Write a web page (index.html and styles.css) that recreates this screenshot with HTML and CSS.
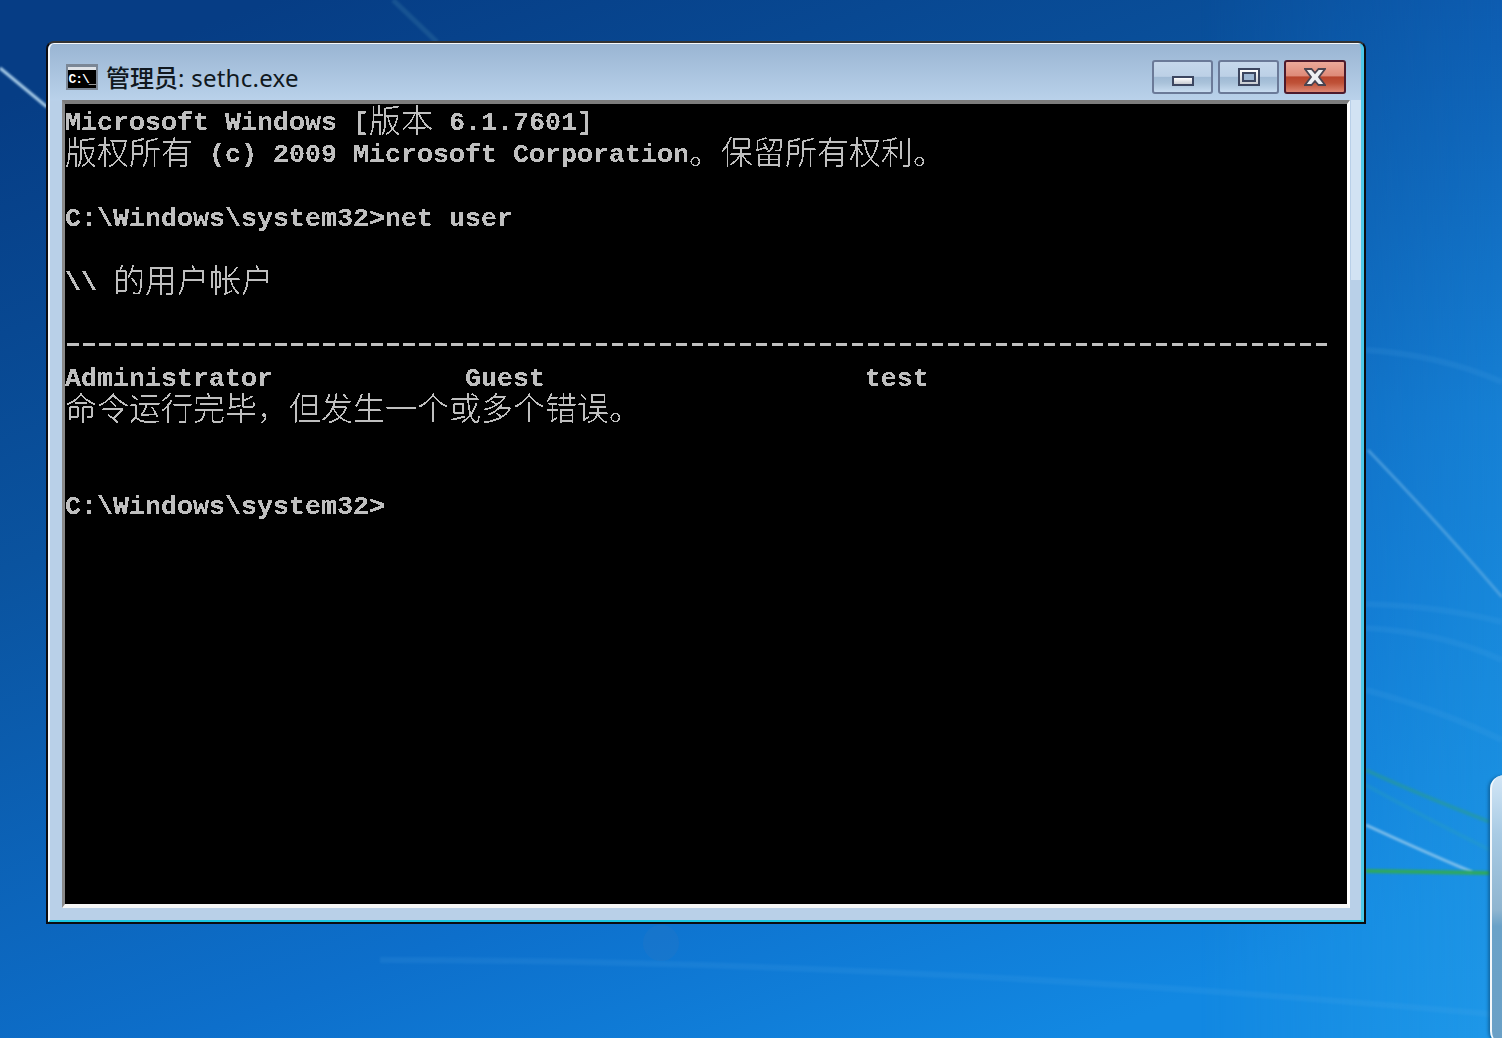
FILE: index.html
```html
<!DOCTYPE html>
<html lang="zh-CN">
<head>
<meta charset="utf-8">
<title>sethc.exe</title>
<link rel="stylesheet" href="styles.css">
</head>
<body class="desktop">
<svg class="wallpaper" viewBox="0 0 1502 1038" width="1502" height="1038" aria-hidden="true">
  <defs>
    <linearGradient id="sky" x1="0.18" y1="0" x2="0.72" y2="1">
      <stop offset="0" stop-color="#063d85"/>
      <stop offset="0.35" stop-color="#0a539f"/>
      <stop offset="0.75" stop-color="#0d6fcb"/>
      <stop offset="1" stop-color="#1288e2"/>
    </linearGradient>
    <linearGradient id="glow" x1="0" y1="0" x2="0" y2="1">
      <stop offset="0" stop-color="#0d5cb0"/>
      <stop offset="0.4" stop-color="#1680d4"/>
      <stop offset="0.75" stop-color="#1a8fe0"/>
      <stop offset="1" stop-color="#1f98e8"/>
    </linearGradient>
    <linearGradient id="fade" x1="0" y1="0" x2="1" y2="0">
      <stop offset="0" stop-color="#fff" stop-opacity="0"/>
      <stop offset="1" stop-color="#fff"/>
    </linearGradient>
    <mask id="rightFade"><rect x="1200" width="302" height="1038" fill="url(#fade)"/></mask>
    <filter id="crisp" color-interpolation-filters="sRGB" x="0" y="0" width="100%" height="100%">
      <feComponentTransfer>
        <feFuncR type="discrete" tableValues="0 0.75 0.75"/>
        <feFuncG type="discrete" tableValues="0 0.75 0.75"/>
        <feFuncB type="discrete" tableValues="0 0.75 0.75"/>
      </feComponentTransfer>
    </filter>
  </defs>
  <rect width="1502" height="1038" fill="url(#sky)"/>
  <rect width="1502" height="1038" fill="url(#glow)" mask="url(#rightFade)"/>
  <path class="streak-bright" d="M0 68 L47 107"/>
  <path class="streak-faint" d="M393 0 L437 42"/>
  <path class="streak-mid" d="M1368 450 Q1440 525 1502 597"/>
  <path class="streak-soft" d="M1366 350 Q1440 355 1502 382"/>
  <path class="streak-soft" d="M1366 604 Q1440 606 1502 622"/>
  <path class="streak-soft" d="M1366 628 Q1440 632 1502 660"/>
  <path class="streak-soft" d="M1366 690 Q1440 710 1502 740"/>
  <path class="streak-green-faint" d="M1366 770 Q1420 795 1490 822"/>
  <path class="streak-green-fainter" d="M1366 785 Q1420 815 1490 850"/>
  <path class="streak-white" d="M1366 825 Q1420 850 1472 872"/>
  <path class="streak-green" d="M1366 871 L1490 873"/>
  <path class="streak-soft" d="M380 960 Q900 960 1502 1015"/>
  <circle class="bubble" cx="661" cy="943" r="18"/>
</svg>

<div class="gadget"></div>

<section class="window">
  <div class="frame">
    <header class="titlebar">
      <div class="app-icon"><span class="app-icon-text">C:\_</span></div>
      <h1 class="title"><span class="title-cjk">管理员</span>: sethc.exe</h1>
      <div class="controls">
        <button class="ctl" type="button" aria-label="minimize"><span class="glyph-min"></span></button>
        <button class="ctl" type="button" aria-label="maximize"><span class="glyph-max"></span></button>
        <button class="ctl ctl-close" type="button" aria-label="close">
          <svg class="glyph-close" viewBox="0 0 22 18" width="22" height="18"><path d="M1 1H7.5L11 5 14.5 1H21L15 9 21 17H14.5L11 13 7.5 17H1L7 9Z"/></svg>
        </button>
      </div>
    </header>
    <div class="client">
      <div class="console">
        <div class="line">Microsoft Windows [<span class="cjk">版本</span> 6.1.7601]</div>
        <div class="line"><span class="cjk">版权所有</span> (c) 2009 Microsoft Corporation<span class="cjk">。保留所有权利。</span></div>
        <div class="line"></div>
        <div class="line">C:\Windows\system32&gt;net user</div>
        <div class="line"></div>
        <div class="line">\\ <span class="cjk">的用户帐户</span></div>
        <div class="line"></div>
        <div class="line"><span class="rule">-------------------------------------------------------------------------------</span></div>
        <div class="line">Administrator            Guest                    test</div>
        <div class="line"><span class="cjk">命令运行完毕，但发生一个或多个错误。</span></div>
        <div class="line"></div>
        <div class="line"></div>
        <div class="line">C:\Windows\system32&gt;</div>
      </div>
    </div>
  </div>
</section>
</body>
</html>
```

FILE: styles.css
```css
* { box-sizing: border-box; }

html, body { height: 100%; }

.desktop {
  margin: 0;
  height: 1038px;
  overflow: hidden;
  position: relative;
  padding: 41px 0 0 46px;
  background: #0a5cb0;
}

.wallpaper {
  position: absolute;
  left: 0;
  top: 0;
  display: block;
}

.wallpaper path { fill: none; filter: blur(.8px); }

.streak-bright { stroke: #a9cde8; stroke-width: 3; filter: none; }
.streak-faint { stroke: #3f7fa8; stroke-width: 5; opacity: .3; }
.streak-mid { stroke: #6db4e6; stroke-width: 3; opacity: .55; }
.streak-soft { stroke: #5fb0ea; stroke-width: 6; opacity: .12; }
.streak-green { stroke: #2ea860; stroke-width: 4; }
.streak-green-faint { stroke: #2a9d8c; stroke-width: 4; opacity: .55; }
.streak-green-fainter { stroke: #2fa6b0; stroke-width: 4; opacity: .25; }
.streak-white { stroke: #a9d4f0; stroke-width: 3; opacity: .7; }
.bubble { fill: #2a76c4; opacity: .3; }

.gadget {
  position: absolute;
  left: 1490px;
  top: 775px;
  width: 60px;
  height: 270px;
  border-left: 2px solid #f4f8fb;
  border-radius: 14px 0 0 14px;
  box-shadow: -3px 0 3px -1px rgba(8, 72, 120, .55);
  background: linear-gradient(#d2e6f6 0, #a9cbe4 22%, #8fb5d0 50%, #6aa2c8 56%, #6aa0c6 100%);
}

.window {
  position: relative;
  width: 1320px;
  height: 883px;
  border: 2px solid #0c0c10;
  border-top-color: #333;
  border-radius: 8px 8px 0 0;
}

.frame {
  height: 100%;
  display: flex;
  flex-direction: column;
  padding: 0 11px 12px 12px;
  border-style: solid;
  border-width: 1px 3px 2px 2px;
  border-color: #f6f9fc #4ec9ea #1cc6e2 #f6f9fc;
  border-radius: 6px 6px 0 0;
  background:
    linear-gradient(#d2e3f3, #d2e3f3) no-repeat right 0 top 56px / 10px 180px,
    linear-gradient(#9ab5d3 0, #b9d1ea 56px, #b9d0e8 57px);
}

.titlebar {
  height: 56px;
  flex: none;
  display: flex;
  align-items: flex-start;
  padding: 16px 4px 0;
}

.app-icon {
  width: 32px;
  height: 26px;
  margin-top: 4px;
  border: 2px solid #7b8796;
  border-top-width: 3px;
  background: linear-gradient(#dfe3e8 0, #dfe3e8 3px, #000 3px);
  display: flex;
  align-items: flex-end;
  justify-content: center;
  overflow: hidden;
}

.app-icon-text {
  font: bold 13px/16px "Liberation Mono", monospace;
  letter-spacing: -1px;
  color: #fff;
}

.title {
  margin: 0 0 0 8px;
  font: 400 24px/34px "Noto Sans", "Noto Sans CJK SC", sans-serif;
  color: #101820;
  white-space: pre;
  letter-spacing: .25px;
}

.title-cjk { font-family: "Noto Sans CJK SC", sans-serif; font-weight: 500; letter-spacing: 0; }

.controls {
  margin-left: auto;
  display: flex;
  gap: 5px;
}

.ctl {
  width: 61px;
  height: 34px;
  padding: 0;
  border: 2px solid #6b7a98;
  border-radius: 3px;
  background: linear-gradient(#c6d8eb 0, #bcd0e6 48%, #9fb9d4 50%, #a9c2da 70%, #c8dcf0 100%);
  display: flex;
  align-items: center;
  justify-content: center;
}

.ctl-close {
  width: 62px;
  border-color: #4d1a2c;
  background: linear-gradient(#eba99a 0, #de8a78 46%, #b8442c 50%, #bf5238 70%, #dc8672 100%);
}

.glyph-min {
  display: block;
  width: 22px;
  height: 10px;
  margin-top: 8px;
  border: 2px solid #3c4660;
  background: linear-gradient(#fff, #c8ccd2);
}

.glyph-max {
  display: flex;
  align-items: center;
  justify-content: center;
  width: 22px;
  height: 18px;
  border: 2px solid #3c4660;
  background: linear-gradient(#fff, #c8ccd2);
}

.glyph-max::before {
  content: "";
  display: block;
  width: 10px;
  height: 6px;
  border: 2px solid #3c4660;
  background: #9db6d2;
}

.glyph-close { display: block; }
.glyph-close path { fill: #eef0f3; stroke: #4a4450; stroke-width: 1.8; }

.client {
  flex: 1;
  min-height: 0;
  border-style: solid;
  border-width: 4px 3px 4px 3px;
  border-color: #7d7d7d #fff #f6f6f6 #8a8a8a;
  background: #000;
}

.console {
  height: 100%;
  padding-top: 3px;
  background: #000;
  color: #c0c0c0;
  font: bold 26.67px/32px "Liberation Mono", monospace;
  filter: url(#crisp);
}

.line {
  height: 32px;
  white-space: pre;
}

.cjk {
  font: 300 32px/0 "Noto Sans CJK SC", sans-serif;
  vertical-align: -2px;
}

.rule {
  font: 400 40px/0 "Liberation Mono", monospace;
  letter-spacing: -8px;
  margin-left: -4px;
  vertical-align: -1px;
}
```
